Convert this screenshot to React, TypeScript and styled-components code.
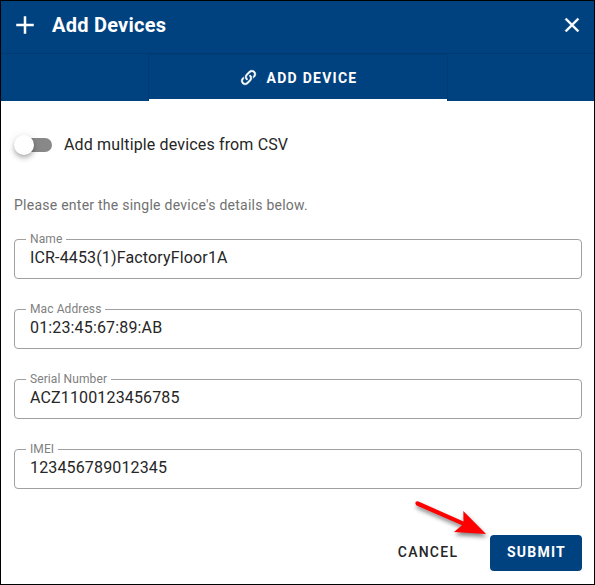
import React from "react";
import styled, { createGlobalStyle } from "styled-components";

const BLUE = "#00427f";

const GlobalStyle = createGlobalStyle`
  *, *::before, *::after { box-sizing: border-box; }
  body {
    margin: 0;
    background: #fff;
    font-family: Roboto, "Liberation Sans", sans-serif;
  }
  button { font-family: inherit; }
`;

const Dialog = styled.main`
  position: relative;
  display: flex;
  flex-direction: column;
  width: 595px;
  height: 585px;
  border: 1px solid #000;
  background: #fff;
  overflow: hidden;
`;

const Header = styled.header`
  display: flex;
  align-items: center;
  height: 52px;
  flex: none;
  padding: 0 10px 4px 9px;
  background: ${BLUE};
  color: #fff;
`;

const Title = styled.h1`
  flex: 1;
  margin: 0 0 0 12px;
  font-size: 20px;
  line-height: 32px;
  font-weight: 700;
  letter-spacing: 0.25px;
`;

const IconButton = styled.button`
  display: flex;
  padding: 0;
  border: 0;
  background: none;
  color: inherit;
`;

const Icon = styled.svg<{ $size: number; $stroke?: number }>`
  display: block;
  flex: none;
  width: ${(p) => p.$size}px;
  height: ${(p) => p.$size}px;
  fill: currentColor;
  stroke: currentColor;
  stroke-width: ${(p) => p.$stroke ?? 0};
`;

const Tabs = styled.nav`
  display: grid;
  grid-template-columns: 148px 298px 1fr;
  height: 48px;
  flex: none;
  background: ${BLUE};
  border-top: 1px solid #003a70;
`;

const Tab = styled.button`
  grid-column: 2;
  display: flex;
  align-items: center;
  justify-content: center;
  gap: 9px;
  padding: 2px 0 0;
  border: 0;
  border-bottom: 2px solid #fff;
  background: ${BLUE};
  box-shadow: inset 0 1px #003e77, -1px 0 #003b71, 1px 0 #003b71;
  color: #fff;
  font-size: 14px;
  font-weight: 700;
  letter-spacing: 1.25px;
`;

const Content = styled.section`
  display: flex;
  flex-direction: column;
  padding: 31px 12px 0 13px;
`;

const SwitchRow = styled.label`
  display: flex;
  align-items: center;
  gap: 12px;
  height: 24px;
  color: #262626;
  font-size: 16px;
  letter-spacing: 0.15px;
`;

const Track = styled.span`
  display: flex;
  align-items: center;
  width: 36px;
  height: 14px;
  margin: 2px 0 0 2px;
  border-radius: 7px;
  background: #888;
`;

const Thumb = styled.span`
  flex: none;
  width: 20px;
  height: 20px;
  margin-left: -2px;
  border-radius: 50%;
  background: #fff;
  box-shadow: 0 2px 4px -1px rgba(0, 0, 0, 0.2), 0 4px 5px rgba(0, 0, 0, 0.14),
    0 1px 10px rgba(0, 0, 0, 0.12);
`;

const Hint = styled.p`
  margin: 39px 0 0;
  color: #717171;
  font-size: 14px;
  line-height: 20px;
  letter-spacing: 0.25px;
`;

const Fields = styled.form`
  display: flex;
  flex-direction: column;
  gap: 24px;
  margin-top: 18px;
`;

const Field = styled.fieldset`
  height: 46px;
  margin: 0;
  min-width: 0;
  padding: 0 15px;
  border: 1px solid #a0a0a0;
  border-radius: 4px;
`;

const Legend = styled.legend`
  height: 13px;
  margin-left: -4px;
  padding: 0 4px;
  color: #808080;
  font-size: 12px;
  line-height: 13px;
  letter-spacing: 0.1px;
`;

const Input = styled.input`
  display: block;
  width: 100%;
  height: 24px;
  padding: 0;
  border: 0;
  outline: 0;
  background: none;
  color: #262626;
  font: 16px/24px Roboto, sans-serif;
  letter-spacing: 0.15px;
`;

const Actions = styled.footer`
  display: flex;
  justify-content: flex-end;
  margin-top: auto;
  padding: 0 12px 13px;
  gap: 16px;
`;

const Button = styled.button<{ $primary?: boolean }>`
  width: 92px;
  height: 36px;
  padding: ${(p) => (p.$primary ? "0 0 2px 1px" : "0 0 2px")};
  border: 0;
  border-radius: 4px;
  background: ${(p) => (p.$primary ? BLUE : "transparent")};
  color: ${(p) => (p.$primary ? "#fff" : "#262626")};
  font-size: 14px;
  font-weight: ${(p) => (p.$primary ? 700 : 500)};
  letter-spacing: 1.25px;
`;

const Arrow = styled.svg`
  position: absolute;
  left: 404px;
  top: 489px;
  width: 100px;
  height: 64px;
  pointer-events: none;
  filter: drop-shadow(1px 3px 2px rgba(0, 0, 0, 0.5));
`;

const LINK_PATH =
  "M10.59,13.41C11,13.8 11,14.44 10.59,14.83C10.2,15.22 9.56,15.22 9.17,14.83C7.22,12.88 7.22,9.71 9.17,7.76V7.76L12.71,4.22C14.66,2.27 17.83,2.27 19.78,4.22C21.73,6.17 21.73,9.34 19.78,11.29L18.29,12.78C18.3,11.96 18.17,11.14 17.89,10.36L18.36,9.88C19.54,8.71 19.54,6.81 18.36,5.64C17.19,4.46 15.29,4.46 14.12,5.64L10.59,9.17C9.41,10.34 9.41,12.24 10.59,13.41M13.41,9.17C13.8,8.78 14.44,8.78 14.83,9.17C16.78,11.12 16.78,14.29 14.83,16.24V16.24L11.29,19.78C9.34,21.73 6.17,21.73 4.22,19.78C2.27,17.83 2.27,14.66 4.22,12.71L5.71,11.22C5.7,12.04 5.83,12.86 6.11,13.65L5.64,14.12C4.46,15.29 4.46,17.19 5.64,18.36C6.81,19.54 8.71,19.54 9.88,18.36L13.41,14.83C14.59,13.66 14.59,11.76 13.41,10.59C13,10.2 13,9.56 13.41,9.17Z";

const DEVICE_FIELDS = [
  { label: "Name", value: "ICR-4453(1)FactoryFloor1A" },
  { label: "Mac Address", value: "01:23:45:67:89:AB" },
  { label: "Serial Number", value: "ACZ1100123456785" },
  { label: "IMEI", value: "123456789012345" },
];

export default function App() {
  return (
    <>
      <GlobalStyle />
      <Dialog>
        <Header>
          <Icon $size={30} viewBox="0 0 24 24">
            <path d="M19,13H13V19H11V13H5V11H11V5H13V11H19V13Z" />
          </Icon>
          <Title>Add Devices</Title>
          <IconButton aria-label="Close">
            <Icon $size={24} $stroke={0.4} viewBox="0 0 24 24">
              <path d="M19,6.41L17.59,5L12,10.59L6.41,5L5,6.41L10.59,12L5,17.59L6.41,19L12,13.41L17.59,19L19,17.59L13.41,12L19,6.41Z" />
            </Icon>
          </IconButton>
        </Header>
        <Tabs>
          <Tab>
            <Icon $size={19} $stroke={0.6} viewBox="0 0 24 24">
              <path d={LINK_PATH} />
            </Icon>
            ADD DEVICE
          </Tab>
        </Tabs>
        <Content>
          <SwitchRow>
            <Track>
              <Thumb />
            </Track>
            Add multiple devices from CSV
          </SwitchRow>
          <Hint>Please enter the single device's details below.</Hint>
          <Fields>
            {DEVICE_FIELDS.map((f) => (
              <Field key={f.label}>
                <Legend>{f.label}</Legend>
                <Input aria-label={f.label} defaultValue={f.value} />
              </Field>
            ))}
          </Fields>
        </Content>
        <Actions>
          <Button>CANCEL</Button>
          <Button $primary>SUBMIT</Button>
        </Actions>
        <Arrow viewBox="405 490 100 64">
          <path
            d="M415.6 502.2 Q417 500.6 419 501.8 L463.5 521.4 L463.3 511 L486 534 L454 532 L462 525.3 L416.6 505.4 Q414.8 504 415.6 502.2Z"
            fill="#f00"
          />
        </Arrow>
      </Dialog>
    </>
  );
}
